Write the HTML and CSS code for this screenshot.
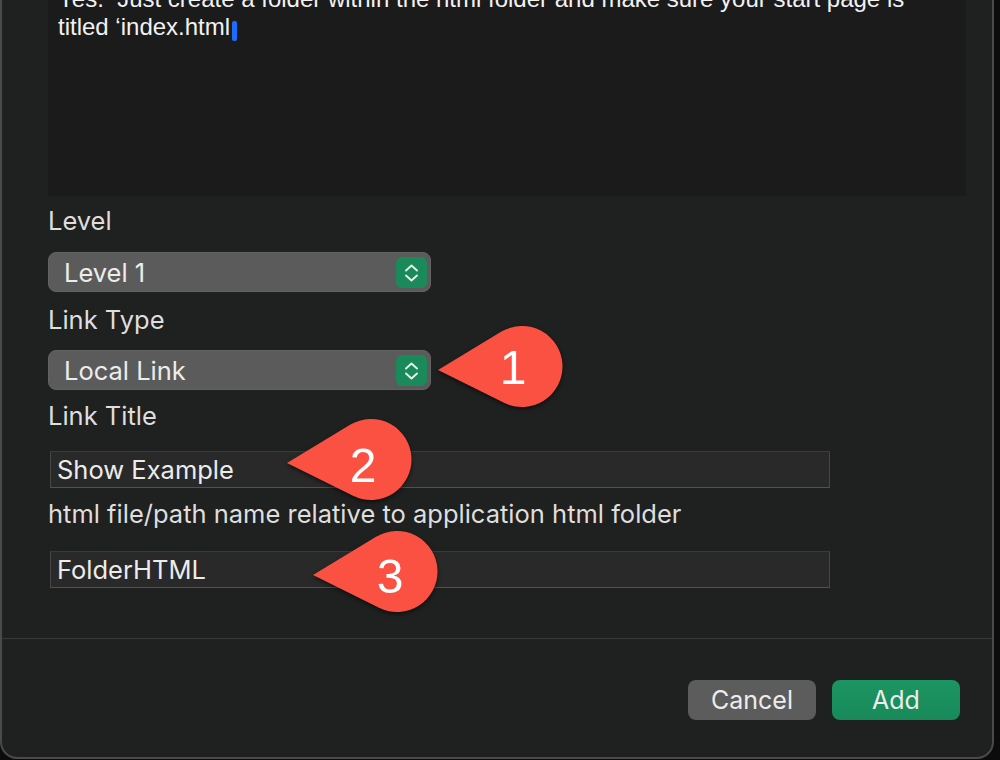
FILE: index.html
```html
<!DOCTYPE html>
<html>
<head>
<meta charset="utf-8">
<link rel="stylesheet" href="styles.css">
</head>
<body>
<div class="dialog">
  <div class="content">
    <div class="textarea">
      <p class="ta-text">Yes.&nbsp; Just create a folder within the html folder and make sure your start page is<br>titled ‘index.html<span class="caret"></span></p>
    </div>
    <div class="label lbl-level">Level</div>
    <div class="select sel-level">
      <span class="sel-text">Level 1</span>
      <span class="stepper"><svg width="31" height="31" viewBox="0 0 31 31"><path d="M10 13.5 L15.5 8.5 L21 13.5 M10 18.5 L15.5 23.5 L21 18.5" fill="none" stroke="#e3f2ea" stroke-width="1.9" stroke-linecap="round" stroke-linejoin="round"/></svg></span>
    </div>
    <div class="label lbl-type">Link Type</div>
    <div class="select sel-type">
      <span class="sel-text">Local Link</span>
      <span class="stepper"><svg width="31" height="31" viewBox="0 0 31 31"><path d="M10 13.5 L15.5 8.5 L21 13.5 M10 18.5 L15.5 23.5 L21 18.5" fill="none" stroke="#e3f2ea" stroke-width="1.9" stroke-linecap="round" stroke-linejoin="round"/></svg></span>
    </div>
    <div class="label lbl-title">Link Title</div>
    <div class="field fld-title">Show Example</div>
    <div class="label lbl-path">html file/path name relative to application html folder</div>
    <div class="field fld-path">FolderHTML</div>
  </div>
  <div class="footer">
    <button class="btn btn-cancel">Cancel</button>
    <button class="btn btn-add">Add</button>
  </div>
</div>
<svg class="callouts" width="1000" height="760" viewBox="0 0 1000 760">
  <defs>
    <path id="drop" d="M0,0 L63.03,-38.15 A40.5,40.5 0 1 1 65.99,32.77 Z"/>
  </defs>
  <use href="#drop" x="438" y="370" fill="#fb5142"/>
  <use href="#drop" x="287" y="463" fill="#fb5142"/>
  <use href="#drop" x="313" y="575" fill="#fb5142"/>
  <text class="num" x="513" y="384">1</text>
  <text class="num" x="363" y="482">2</text>
  <text class="num" x="390" y="593">3</text>
</svg>
</body>
</html>
```
FILE: styles.css
```css
html, body {
  margin: 0;
  padding: 0;
}
body {
  background: #0c0c0c;
  width: 1000px;
  height: 760px;
  overflow: hidden;
  position: relative;
  font-family: "Liberation Sans", Arial, sans-serif;
}
.dialog {
  box-sizing: border-box;
  width: 994px;
  height: 759px;
  background: #1f2020;
  border: 2px solid #4a4a4a;
  border-top: none;
  border-radius: 0 0 17px 17px;
  display: flex;
  flex-direction: column;
}
.content {
  box-sizing: border-box;
  height: 638px;
  padding-left: 46px;
  display: flex;
  flex-direction: column;
  align-items: flex-start;
}
.textarea {
  box-sizing: border-box;
  width: 918px;
  height: 196px;
  flex: none;
  background: #1b1b1b;
  padding-left: 10px;
  overflow: hidden;
}
.ta-text {
  margin: -15px 0 0 0;
  font-size: 24px;
  line-height: 28px;
  color: #f2f2f2;
}
.caret {
  display: inline-block;
  width: 5px;
  height: 20px;
  margin-left: 2px;
  background: #1a6dff;
  border-radius: 2px;
  vertical-align: -6px;
}
.label {
  font-family: "Inter", "Liberation Sans", sans-serif;
  font-size: 25.5px;
  line-height: 30px;
  height: 30px;
  color: #dedede;
  flex: none;
}
.lbl-level { margin-top: 10px; }
.lbl-type { margin-top: 13px; }
.lbl-title { margin-top: 11px; }
.lbl-path { margin-top: 11px; }
.select {
  box-sizing: border-box;
  width: 383px;
  height: 40px;
  flex: none;
  background: #5b5b5b;
  border: 1px solid #626262;
  border-radius: 8px;
  display: flex;
  align-items: center;
  justify-content: space-between;
  padding: 0 3px 0 15px;
  font-family: "Inter", "Liberation Sans", sans-serif;
  font-size: 25.5px;
  color: #ececec;
}
.sel-level { margin-top: 16px; }
.sel-type { margin-top: 15px; }
.stepper {
  width: 31px;
  height: 31px;
  border-radius: 6px;
  background: #1b8a5b;
  display: flex;
}
.field {
  box-sizing: border-box;
  width: 780px;
  height: 37px;
  flex: none;
  margin-left: 2px;
  background: #292929;
  border: 1px solid #454545;
  border-top-color: #3a3a3a;
  border-bottom-color: #505050;
  padding-left: 6px;
  font-family: "Inter", "Liberation Sans", sans-serif;
  font-size: 25.5px;
  line-height: 35px;
  color: #ececec;
}
.fld-title { margin-top: 20px; }
.fld-path { margin-top: 22px; }
.footer {
  border-top: 1px solid #393939;
  display: flex;
  justify-content: flex-end;
  gap: 16px;
  padding: 41px 32px 0 0;
}
.btn {
  width: 128px;
  height: 40px;
  border: none;
  border-radius: 8px;
  font-family: "Inter", "Liberation Sans", sans-serif;
  font-size: 25px;
  color: #ececec;
  padding: 0;
}
.btn-cancel { background: #5c5c5c; }
.btn-add { background: linear-gradient(#1c9562, #198a5a); }
.callouts {
  position: absolute;
  left: 0;
  top: 0;
  pointer-events: none;
  filter: drop-shadow(0 2px 2px rgba(0, 0, 0, 0.55));
}
.num {
  font-family: "Liberation Sans", Arial, sans-serif;
  font-size: 48px;
  fill: #ffffff;
  text-anchor: middle;
}
```
